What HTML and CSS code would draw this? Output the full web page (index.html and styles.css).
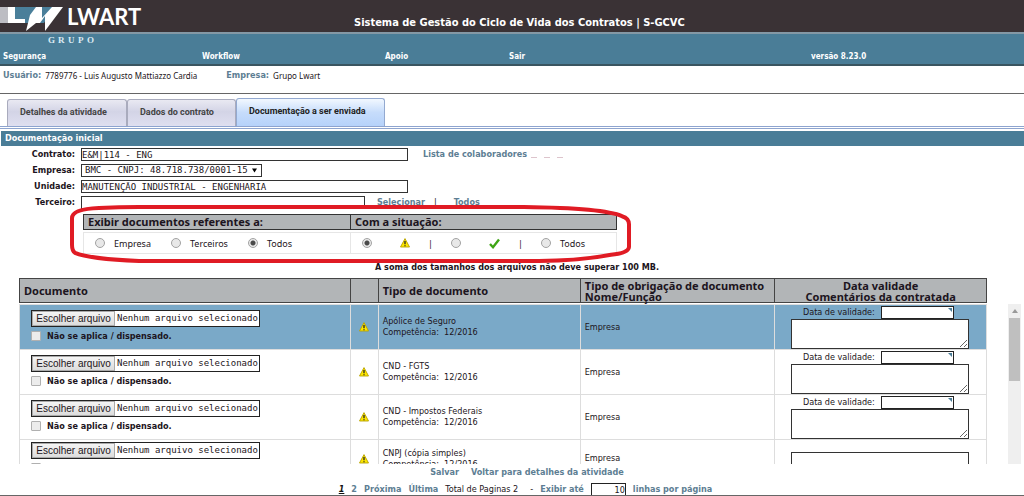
FILE: index.html
```html
<!DOCTYPE html>
<html lang="pt-BR">
<head>
<meta charset="utf-8">
<title>Sistema de Gestão do Ciclo de Vida dos Contratos | S-GCVC</title>
<link rel="stylesheet" href="styles.css">
</head>
<body>
<svg class="defs" aria-hidden="true">
  <symbol id="warn" viewBox="0 0 10 10">
    <path d="M5 .6 9.5 9H.5z" fill="#ffe800" stroke="#b8a300" stroke-width=".9" stroke-linejoin="round"/>
    <path d="M5 3v3.2M5 7.2v1.1" stroke="#222" stroke-width="1.3"/>
  </symbol>
</svg>

<header class="top">
  <div class="brand">
    <svg class="mark" viewBox="0 0 64 26" aria-hidden="true">
      <path d="M0 0h8v16H0z" fill="#bdbdc3"/>
      <path d="M14 0h40L44 16H14z" fill="#4a7f9a"/>
      <path d="M8 0h7v12h10v4H8z" fill="#fff"/>
      <path d="M30 8 36 0h6v11L52 0h11L45 24V9L40 16h-4L26 24z" fill="#fff"/>
    </svg>
    <span class="brand-name">LWART</span>
    <svg class="brand-group" viewBox="0 0 50 12"><text x="0 10 20 30 39" y="9">GRUPO</text></svg>
  </div>
  <h1>Sistema de Gestão do Ciclo de Vida dos Contratos | S-GCVC</h1>
</header>
<nav class="menu">
  <a href="#">Segurança</a><a href="#">Workflow</a><a href="#">Apoio</a><a href="#">Sair</a><span>versão 8.23.0</span>
</nav>
<div class="user"><b>Usuário:</b><span>7789776 - Luis Augusto Mattiazzo Cardia</span><b class="company">Empresa:</b><span>Grupo Lwart</span></div>

<div class="tabs" role="tablist">
  <button role="tab">Detalhes da atividade</button>
  <button role="tab">Dados do contrato</button>
  <button role="tab" class="active" aria-selected="true">Documentação a ser enviada</button>
</div>
<h2>Documentação inicial</h2>

<form class="form">
  <div class="field"><label for="contrato">Contrato:</label><input id="contrato" class="long" value="E&amp;M|114 - ENG"><a href="#">Lista de colaboradores</a><span class="dashes"><i></i><i></i><i></i></span></div>
  <div class="field"><label for="empresa">Empresa:</label><span class="select"><select id="empresa"><option>BMC - CNPJ: 48.718.738/0001-15</option></select><svg viewBox="0 0 6 5"><path d="M0 0h6L3 5z"/></svg></span></div>
  <div class="field"><label for="unidade">Unidade:</label><input id="unidade" class="long" value="MANUTENÇÃO INDUSTRIAL - ENGENHARIA"></div>
  <div class="field"><label for="terceiro">Terceiro:</label><input id="terceiro" class="short"><a href="#">Selecionar</a><span class="bar">|</span><a href="#">Todos</a></div>
</form>

<div class="filter">
  <div class="filter-head"><span>Exibir documentos referentes a:</span><span>Com a situação:</span></div>
  <div class="filter-body">
    <div class="refs">
      <label><input type="radio" name="ref">Empresa</label>
      <label><input type="radio" name="ref">Terceiros</label>
      <label><input type="radio" name="ref" checked>Todos</label>
    </div>
    <div class="status">
      <label class="pic"><input type="radio" name="sit" checked aria-label="Pendente"><svg class="warn"><use href="#warn"/></svg></label>
      <span>|</span>
      <label class="pic"><input type="radio" name="sit" aria-label="Aprovado"><svg class="check" viewBox="0 0 11 11"><path d="M1 6 4 9.2 10 1.5" fill="none" stroke="#3fa516" stroke-width="2.4"/></svg></label>
      <span>|</span>
      <label><input type="radio" name="sit">Todos</label>
    </div>
  </div>
  <svg class="ring" viewBox="0 0 564 60" preserveAspectRatio="none" aria-hidden="true"><path d="M70 3H455Q535 4 553 12Q560 14 560 20V42Q560 48 542 50Q510 56 470 56H70Q20 54 6 48Q3 46 3 40V14Q3 5 30 4Q50 3 70 3z"/></svg>
</div>
<p class="limit">A soma dos tamanhos dos arquivos não deve superar 100 MB.</p>

<section class="docs">
  <table class="grid head">
    <colgroup><col class="c1"><col class="c2"><col class="c3"><col class="c4"><col class="c5"></colgroup>
    <thead><tr><th>Documento</th><th></th><th>Tipo de documento</th><th>Tipo de obrigação de documento<br>Nome/Função</th><th class="mid">Data validade<br>Comentários da contratada</th></tr></thead>
  </table>
  <div class="scroll">
    <table class="grid body">
      <colgroup><col class="c1"><col class="c2"><col class="c3"><col class="c4"><col class="c5"></colgroup>
      <tbody>
      <tr class="sel">
        <td><div class="file"><button>Escolher arquivo</button><span>Nenhum arquivo selecionado</span></div><label class="na"><input type="checkbox">Não se aplica / dispensado.</label></td>
        <td class="ico"><svg class="warn"><use href="#warn"/></svg></td>
        <td>Apólice de Seguro<br>Competência:&nbsp; 12/2016</td>
        <td>Empresa</td>
        <td class="val"><label>Data de validade:<span class="date"><input></span></label><textarea aria-label="Comentários"></textarea></td>
      </tr>
      <tr>
        <td><div class="file"><button>Escolher arquivo</button><span>Nenhum arquivo selecionado</span></div><label class="na"><input type="checkbox">Não se aplica / dispensado.</label></td>
        <td class="ico"><svg class="warn"><use href="#warn"/></svg></td>
        <td>CND - FGTS<br>Competência:&nbsp; 12/2016</td>
        <td>Empresa</td>
        <td class="val"><label>Data de validade:<span class="date"><input></span></label><textarea aria-label="Comentários"></textarea></td>
      </tr>
      <tr>
        <td><div class="file"><button>Escolher arquivo</button><span>Nenhum arquivo selecionado</span></div><label class="na"><input type="checkbox">Não se aplica / dispensado.</label></td>
        <td class="ico"><svg class="warn"><use href="#warn"/></svg></td>
        <td>CND - Impostos Federais<br>Competência:&nbsp; 12/2016</td>
        <td>Empresa</td>
        <td class="val"><label>Data de validade:<span class="date"><input></span></label><textarea aria-label="Comentários"></textarea></td>
      </tr>
      <tr class="tight">
        <td><div class="file"><button>Escolher arquivo</button><span>Nenhum arquivo selecionado</span></div><label class="na"><input type="checkbox"></label></td>
        <td class="ico"><svg class="warn"><use href="#warn"/></svg></td>
        <td>CNPJ (cópia simples)<br>Competência:&nbsp; 12/2016</td>
        <td>Empresa</td>
        <td class="val nodate"><textarea aria-label="Comentários"></textarea></td>
      </tr>
      </tbody>
    </table>
    <div class="track" aria-hidden="true"><svg viewBox="0 0 6 4"><path d="M0 4 3 0 6 4z"/></svg><div class="thumb"></div></div>
  </div>
</section>

<footer>
  <div class="actions"><a href="#">Salvar</a><a href="#">Voltar para detalhes da atividade</a></div>
  <div class="pager"><b class="cur">1</b><a href="#">2</a><a href="#">Próxima</a><a href="#">Última</a><span>Total de Paginas 2</span><span class="dash">-</span><label for="rows">Exibir até</label><input id="rows" value="10"><b>linhas por página</b></div>
</footer>
</body>
</html>
```
FILE: styles.css
```css
* { box-sizing: border-box; }
body {
  margin: 0;
  height: 100vh;
  display: flex;
  flex-direction: column;
  background: #fff;
  color: #1c1420;
  font: 9px/11px "DejaVu Sans Condensed", "DejaVu Sans", sans-serif;
}
a { color: #5d7e93; font-weight: bold; text-decoration: none; }
button, input, select, textarea { font: inherit; color: inherit; margin: 0; }
.defs { position: absolute; width: 0; height: 0; }

.top {
  display: flex;
  height: 34px;
  background: #3a3235;
  border-bottom: 2px solid #8498a5;
  flex: none;
}
.brand { position: relative; display: flex; width: 354px; padding-top: 7px; }
.mark { width: 64px; height: 26px; }
.brand-name {
  margin-left: 3px;
  color: #fff;
  font: bold 22px/20px "Lato", sans-serif;
}
.brand-group {
  position: absolute;
  left: 48px;
  top: 34px;
  width: 50px;
  height: 12px;
}
.brand-group text { fill: #dcebf3; font: bold 9px "Liberation Serif", serif; }
h1 {
  margin: 0;
  padding-top: 16px;
  color: #fff;
  font-size: 11px;
  line-height: 14px;
}
.menu {
  display: grid;
  grid-template-columns: 199fr 183fr 124fr 302fr 213fr;
  align-items: end;
  flex: none;
  height: 32px;
  padding: 0 0 2px 3px;
  background: #4a7d97;
  border-bottom: 2px solid #3a5560;
  font-size: 8px;
  font-weight: bold;
  color: #fff;
}
.menu a { color: #fff; }
.user {
  display: flex;
  gap: 4px;
  height: 28px;
  flex: none;
  padding: 4px 3px;
  border-bottom: 1px solid #666;
  font: 8px/11px "Noto Sans", sans-serif;
}
.user b { color: #5d7e93; font: bold 9px/11px "DejaVu Sans Condensed", sans-serif; }
.user .company { margin-left: 25px; }

.tabs {
  display: flex;
  align-items: flex-end;
  flex: none;
  height: 35px;
  padding-left: 7px;
  border-bottom: 3px double #8ea4cf;
}
.tabs button {
  height: 27px;
  padding: 0 12px 2px;
  border: 1px solid #a9abbd;
  border-bottom: 0;
  border-radius: 3px 3px 0 0;
  background: linear-gradient(#e9e9f2, #d3d4e6 45%, #dfdff0);
  color: #444;
  font: bold 9px/11px "Roboto", sans-serif;
  text-align: left;
}
.tabs button:nth-child(1) { min-width: 120px; }
.tabs button:nth-child(2) { min-width: 109px; }
.tabs button.active {
  height: 28px;
  min-width: 149px;
  background: linear-gradient(#f2f8ff, #c6dcfb 50%, #b6d2fa);
  border-color: #93a9d0;
  color: #222;
}
h2 {
  flex: none;
  margin: 2px 0 0 1px;
  padding: 2px 4px;
  background: #4a7d97;
  color: #fff;
  font-size: 9px;
  line-height: 11px;
}

.form { flex: none; display: grid; gap: 3px; padding-top: 2px; }
.field { display: flex; height: 13px; align-items: center; }
.field > label { width: 81px; padding-right: 6px; text-align: right; font-weight: bold; }
.field input, select {
  height: 13px;
  padding: 0;
  border: 1px solid #333;
  border-radius: 0;
  background: #fff;
  font: 9px/11px "DejaVu Sans Mono", monospace;
}
.field .long { width: 327px; margin-right: 15px; }
.field .short { width: 284px; margin-right: 12px; }
.field .bar { padding: 0 17px 0 9px; }
.dashes { display: flex; gap: 7px; margin-left: 4px; }
.dashes i { width: 6px; height: 1px; margin-top: 6px; background: #ddc4cc; }
.select { position: relative; display: flex; }
select { appearance: none; width: 181px; padding-left: 3px; }
.select svg { position: absolute; right: 5px; top: 4px; width: 5px; height: 5px; }

.filter {
  position: relative;
  flex: none;
  width: 534px;
  margin: 5px 0 0 83px;
}
.filter-head, .filter-body { display: grid; grid-template-columns: 1fr 1fr; }
.filter-head {
  border: 1px solid #333;
  background: #b2b5b7;
  font: bold 11px/14px "Noto Sans", sans-serif;
}
.filter-head span { padding-left: 4px; }
.filter-head span + span { border-left: 1px solid #333; }
.filter-body {
  height: 22px;
  margin-top: 2px;
  border: 1px solid #e6e6e6;
  font: 9px/11px "Noto Sans", sans-serif;
}
.refs, .status { display: flex; align-items: center; }
.refs { gap: 20px; padding-left: 11px; }
.status { gap: 18px; padding-left: 11px; border-left: 1px solid #e6e6e6; }
.refs label, .status label { display: flex; align-items: center; gap: 9px; }
.status .pic { gap: 28px; }
input[type=radio] {
  appearance: none;
  width: 10px;
  height: 10px;
  border: 1px solid #a2a2a2;
  border-radius: 50%;
  background: #e8e8e8;
}
input[type=radio]:checked { background: radial-gradient(#4a4a4a 0 2px, #e8e8e8 3px); }
.warn { width: 10px; height: 10px; }
.check { width: 11px; height: 11px; }
.ring { position: absolute; left: -14px; top: -10px; width: 564px; height: 61px; }
.ring path { fill: none; stroke: #e01b24; stroke-width: 4; }
.limit { flex: none; margin: 8px 0 5px 375px; font-weight: bold; }

.docs { flex: 1; min-height: 0; display: flex; flex-direction: column; padding: 0 3px 0 19px; }
.grid { table-layout: fixed; border-collapse: collapse; flex: 1; }
.head { flex: none; margin-right: 34px; }
.c1 { width: 34.2%; }
.c2 { width: 2.9%; }
.c3 { width: 20.9%; }
.c4 { width: 20.1%; }
.c5 { width: 21.9%; }
th {
  height: 24px;
  padding: 0 4px;
  border: 1px solid #444;
  background: #b2b5b7;
  text-align: left;
  white-space: nowrap;
  font: bold 11px/11px "Noto Sans", sans-serif;
}
th.mid { text-align: center; }
.scroll { flex: 1; min-height: 0; display: flex; align-items: flex-start; gap: 21px; padding-top: 1px; overflow: hidden; }
.body tr { height: 45px; }
.body .tight { height: 38px; }
td { padding: 0 4px; border: 1px solid #ddd; }
td:first-child { padding: 0 4px 3px 11px; }
.sel td { background: #7aa9c8; }
.file { display: flex; width: 229px; height: 17px; border: 1px solid #222; background: #fff; overflow: hidden; font: 9px/15px "DejaVu Sans Mono", monospace; white-space: nowrap; }
.file button {
  width: 83px;
  flex: none;
  padding: 1px 0 0;
  border: 1px solid #aaa;
  background: linear-gradient(#f4f4f4, #dcdcdc);
  font: 10px/12px "Liberation Sans", sans-serif;
}
.file span { padding-left: 2px; }
.na { display: flex; align-items: center; gap: 6px; margin-top: 4px; font-weight: bold; }
.na input { appearance: none; width: 10px; height: 10px; border: 1px solid #b0b0b0; border-radius: 1px; background: #ececec; }
.ico { text-align: center; }
.ico svg { display: block; margin: auto; }
td.val { padding: 0 17px 0 16px; vertical-align: top; }
.val label { display: flex; gap: 6px; padding: 1px 0 0 12px; line-height: 12px; }
td.nodate { padding-top: 12px; }
.date { position: relative; display: flex; }
.date input { width: 73px; height: 13px; padding: 0; border: 1px solid #222; background: #fff; }
.date::after {
  content: "";
  position: absolute;
  top: 2px;
  right: 2px;
  border: 2px solid transparent;
  border-top-color: #4a7d97;
  border-right-color: #4a7d97;
}
textarea { display: block; width: 178px; height: 30px; border: 1px solid #333; background: #fff; }
.tight textarea { height: 24px; }
.track { width: 13px; align-self: stretch; background: #efefef; padding-top: 5px; }
.track svg { display: block; width: 6px; height: 4px; margin: 0 auto 5px; fill: #999; }
.thumb { height: 63px; margin: 0 1px; background: #bfbfbf; }

footer { flex: none; padding: 3px 0 0; border-bottom: 1px solid #666; }
.actions { display: flex; justify-content: center; gap: 12px; padding-left: 30px; }
.pager { display: flex; justify-content: center; align-items: flex-end; gap: 7px; height: 17px; padding-left: 27px; }
.pager b, .pager label { color: #5d7e93; font-weight: bold; }
.pager .cur { color: #111; font-style: italic; text-decoration: underline; }
.pager .dash { margin-left: 5px; }
.pager input { width: 35px; height: 12px; padding: 0; border: 1px solid #222; border-bottom: 0; text-align: right; }
```
